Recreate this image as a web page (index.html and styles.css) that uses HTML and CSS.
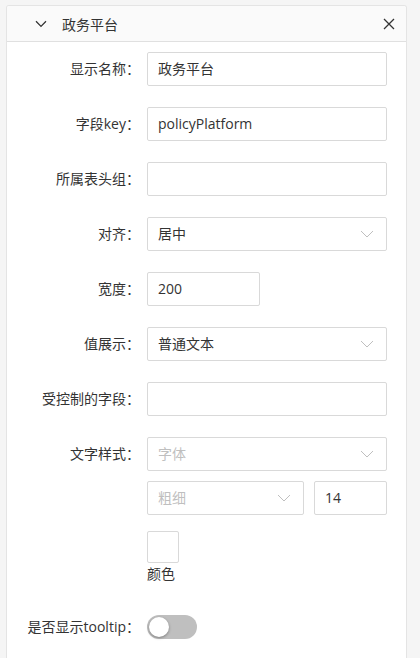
FILE: index.html
```html
<!DOCTYPE html>
<html lang="zh">
<head>
<meta charset="utf-8">
<link rel="stylesheet" href="styles.css">
</head>
<body>
<div class="panel">
  <div class="panel-head">
    <svg class="chev" width="12" height="8" viewBox="0 0 12 8"><path d="M1 1.2 L6 6.4 L11 1.2" fill="none" stroke="#333" stroke-width="1.3"/></svg>
    <span class="title">政务平台</span>
    <svg class="close" width="12" height="12" viewBox="0 0 12 12"><path d="M1 1 L11 11 M11 1 L1 11" fill="none" stroke="#333" stroke-width="1.3"/></svg>
  </div>
  <div class="form">
    <div class="row">
      <div class="label">显示名称：</div>
      <div class="ctrl"><div class="input">政务平台</div></div>
    </div>
    <div class="row">
      <div class="label">字段key：</div>
      <div class="ctrl"><div class="input">policyPlatform</div></div>
    </div>
    <div class="row">
      <div class="label">所属表头组：</div>
      <div class="ctrl"><div class="input"></div></div>
    </div>
    <div class="row">
      <div class="label">对齐：</div>
      <div class="ctrl"><div class="input select">居中<svg class="arrow" width="14" height="8" viewBox="0 0 14 8"><path d="M1 1 L7 7 L13 1" fill="none" stroke="#bfbfbf" stroke-width="1"/></svg></div></div>
    </div>
    <div class="row">
      <div class="label">宽度：</div>
      <div class="ctrl"><div class="input narrow">200</div></div>
    </div>
    <div class="row">
      <div class="label">值展示：</div>
      <div class="ctrl"><div class="input select">普通文本<svg class="arrow" width="14" height="8" viewBox="0 0 14 8"><path d="M1 1 L7 7 L13 1" fill="none" stroke="#bfbfbf" stroke-width="1"/></svg></div></div>
    </div>
    <div class="row">
      <div class="label">受控制的字段：</div>
      <div class="ctrl"><div class="input"></div></div>
    </div>
    <div class="row top">
      <div class="label">文字样式：</div>
      <div class="ctrl stack">
        <div class="input select placeholder">字体<svg class="arrow" width="14" height="8" viewBox="0 0 14 8"><path d="M1 1 L7 7 L13 1" fill="none" stroke="#bfbfbf" stroke-width="1"/></svg></div>
        <div class="pair">
          <div class="input select placeholder grow">粗细<svg class="arrow" width="14" height="8" viewBox="0 0 14 8"><path d="M1 1 L7 7 L13 1" fill="none" stroke="#bfbfbf" stroke-width="1"/></svg></div>
          <div class="input size">14</div>
        </div>
        <div class="color">
          <div class="swatch"></div>
          <div class="color-label">颜色</div>
        </div>
      </div>
    </div>
    <div class="row toggle-row">
      <div class="label">是否显示tooltip：</div>
      <div class="ctrl"><div class="switch"><div class="knob"></div></div></div>
    </div>
  </div>
</div>
</body>
</html>
```
FILE: styles.css
```css
* { box-sizing: border-box; }
html, body { margin: 0; padding: 0; }
body {
  background: #f5f5f5;
  font-family: "Open Sans", "Noto Sans CJK SC", sans-serif;
  font-size: 14px;
  color: #333;
  width: 420px;
  height: 658px;
  overflow: hidden;
}
.panel {
  margin: 5px 13px 0 6px;
  background: #fff;
  border: 1px solid #e4e4e4;
  border-bottom: none;
  border-radius: 3px 3px 0 0;
  height: 653px;
  overflow: hidden;
}
.panel-head {
  height: 36px;
  background: #fafafa;
  border-bottom: 1px solid #e0e0e0;
  display: flex;
  align-items: center;
  padding: 0 11px 0 28px;
}
.chev { display: block; }
.title {
  margin-left: 15px;
  font-size: 14px;
  color: #333;
  flex: 1;
}
.close { display: block; }
.form {
  padding-top: 10px;
  display: flex;
  flex-direction: column;
  gap: 21px;
}
.row {
  display: flex;
  align-items: center;
}
.row.top { align-items: flex-start; }
.label {
  width: 133px;
  text-align: right;
  line-height: 34px;
  white-space: nowrap;
  color: #333;
}
.ctrl {
  margin-left: 7px;
  width: 240px;
}
.input {
  height: 34px;
  border: 1px solid #d9d9d9;
  border-radius: 2px;
  padding: 0 10px;
  display: flex;
  align-items: center;
  color: #333;
  line-height: 1;
}
.input.narrow { width: 113px; }
.select { justify-content: space-between; }
.arrow { margin-right: 2px; }
.placeholder { color: #bfbfbf; }
.stack {
  display: flex;
  flex-direction: column;
}
.pair {
  display: flex;
  gap: 10px;
  margin-top: 10px;
}
.grow { flex: 1; }
.size { width: 73px; }
.color { margin-top: 16px; }
.swatch {
  width: 32px;
  height: 32px;
  border: 1px solid #d9d9d9;
  border-radius: 2px;
}
.color-label {
  margin-top: 1px;
  line-height: 20px;
}
.toggle-row { margin-top: 5px; }
.switch {
  width: 50px;
  height: 24px;
  border-radius: 12px;
  background: #bfbfbf;
  position: relative;
}
.knob {
  position: absolute;
  left: 2px;
  top: 2px;
  width: 20px;
  height: 20px;
  border-radius: 50%;
  background: #fff;
  box-shadow: 0 1px 3px rgba(0,0,0,0.35);
}
```
